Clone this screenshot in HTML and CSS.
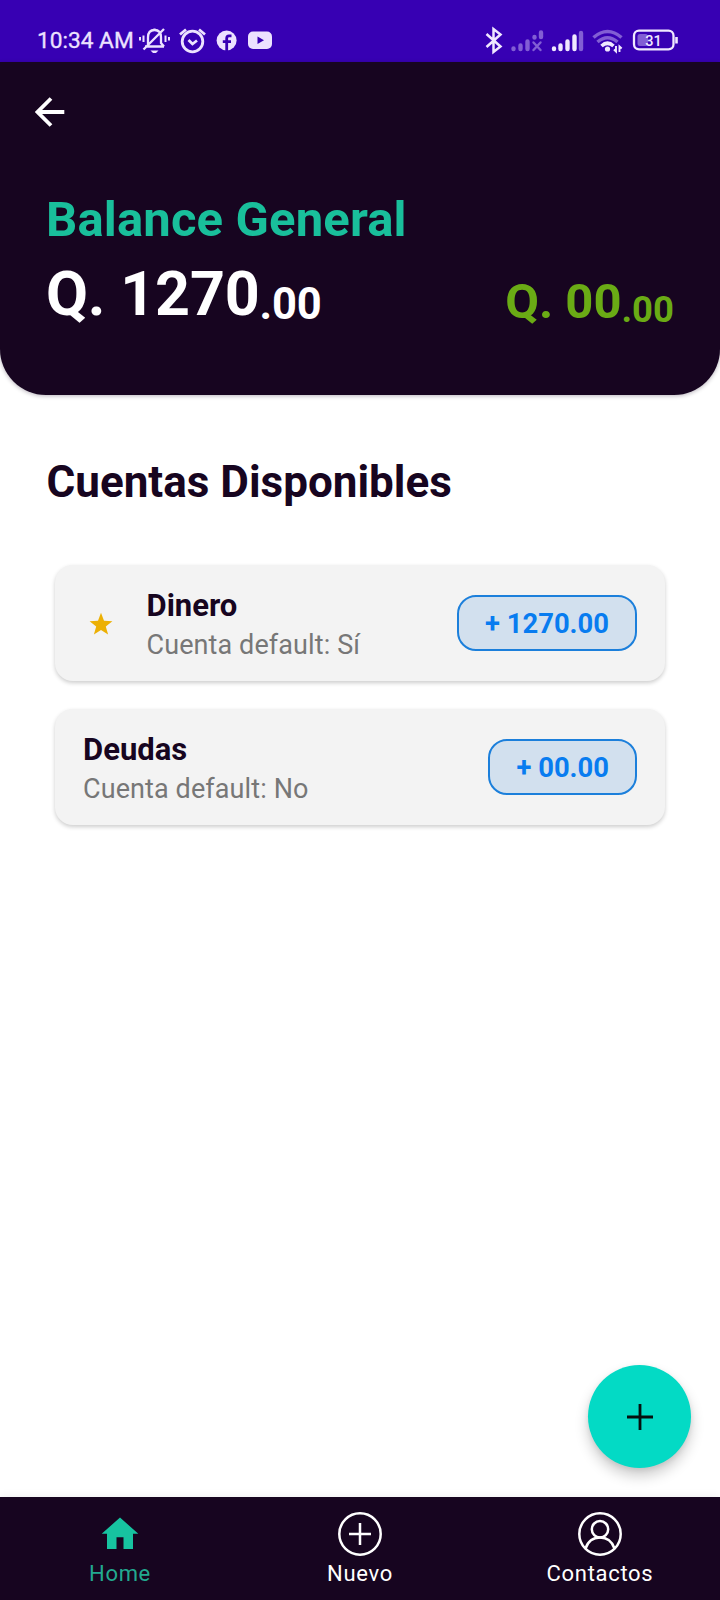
FILE: index.html
```html
<!DOCTYPE html>
<html lang="es">
<head>
<meta charset="utf-8">
<title>Balance General</title>
<link rel="stylesheet" href="styles.css">
</head>
<body>
<div class="screen">
  <div class="status">
    <span class="clock">10:34 AM</span>
    <svg class="status-left" width="136" height="30" viewBox="0 0 136 30" fill="none" stroke="#ece2ff" stroke-width="2.300">
      <path d="M7 21.500H26M10 21V12.500Q10 5 16.500 5Q23 5 23 12.500V18L26 21.500M16.500 6V3.500M5.500 24.500L26 4"/>
      <path d="M12.500 25.500H20.500L18 28H15Z" fill="#ece2ff" stroke="none"/>
      <path d="M5.500 10.500V17M2 12V15.500M27.500 10.500V17M31 12V15.500" stroke-width="2"/>
      <circle cx="54.500" cy="16.500" r="10.300" stroke-width="2.800"/>
      <path d="M50.500 15L54.500 19L59 15.500M42 9.500L48 4.500M67 9.500L61 4.500" stroke-width="2.800"/>
      <circle cx="88.600" cy="15.500" r="10" fill="#ece2ff" stroke="none"/>
      <path d="M88.700 26V13.300Q88.700 10.800 91 10.800H93.500M84.800 16.700H93" stroke="#3700b3" stroke-width="2.800"/>
      <rect x="110" y="6.500" width="24" height="17.500" rx="5" fill="#ece2ff" stroke="none"/>
      <path d="M119.500 11.500L126 15.200L119.500 19Z" fill="#3700b3" stroke="none"/>
    </svg>
    <svg class="status-right" width="196" height="30" viewBox="0 0 196 30" fill="none" stroke="#f0e8ff">
      <path d="M1.500 9L15.500 21.500L8.500 27V4L15.500 9.500L1.500 22" stroke-width="2.500"/>
      <g stroke="#825ed4" stroke-width="4.400" stroke-linecap="round">
        <path d="M28.500 24V23.500M35.500 24V20.500M42.500 24V16.500M49.500 12.500V12M56 12V7.500"/>
        <path d="M48.500 17.500L55.500 25M55.500 17.500L48.500 25" stroke-width="2.400"/>
      </g>
      <path d="M69 24V23.500M75.500 24V20.500M82.500 24V16.500M89.500 24V11.500" stroke-width="4.400" stroke-linecap="round"/>
      <path d="M96 24V8" stroke="#825ed4" stroke-width="4.400" stroke-linecap="round"/>
      <path d="M108.500 12.500Q122.500 .5 136.500 12.500M112.500 17Q122.500 8.500 132.500 17" stroke="#825ed4" stroke-width="3.600"/>
      <path d="M116.500 21Q122.500 15.500 128.500 21" stroke-width="3.600"/>
      <circle cx="122.500" cy="24" r="2.600" fill="#f0e8ff" stroke="none"/>
      <path d="M131 21V26.500L129 24.500M134.500 27V21.500L136.700 23.500" stroke-width="1.900"/>
      <rect x="149" y="5.700" width="39.500" height="18.600" rx="5" stroke-width="2.300"/>
      <rect x="152.500" y="9" width="10.500" height="12" rx="2.500" fill="#825ed4" stroke="none"/>
      <path d="M191.500 12V18.500" stroke-width="2.600"/>
      <text class="battery" x="168.500" y="20.500" text-anchor="middle">31</text>
    </svg>
  </div>

  <header class="header">
    <div class="appbar">
      <svg width="30" height="30" viewBox="0 0 30 30" fill="none" stroke="#fff" stroke-width="3.800"><path d="M29.300 15H3M16 1.500L2.500 15L16 28.500"/></svg>
    </div>
    <h1 class="balance-title">Balance General</h1>
    <div class="amounts">
      <div class="amount">Q. 1270<span class="cents">.00</span></div>
      <div class="amount amount-green">Q. 00<span class="cents">.00</span></div>
    </div>
  </header>

  <main class="main">
    <h2 class="section-title">Cuentas Disponibles</h2>
    <div class="cards">
      <div class="card">
        <svg class="star" width="24" height="24" viewBox="0 0 24 24"><path fill="#ecb004" d="M12 .8L15 8.800L23.400 9.200L16.800 14.400L19.100 22.500L12 17.900L4.900 22.500L7.200 14.400L.6 9.200L9 8.800Z"/></svg>
        <div class="info">
          <div class="name">Dinero</div>
          <div class="detail">Cuenta default: Sí</div>
        </div>
        <div class="pill">+ 1270.00</div>
      </div>
      <div class="card">
        <div class="info">
          <div class="name">Deudas</div>
          <div class="detail">Cuenta default: No</div>
        </div>
        <div class="pill">+ 00.00</div>
      </div>
    </div>
    <div class="fab">
      <svg width="26" height="26" viewBox="0 0 26 26" stroke="#06100f" stroke-width="2.800"><path d="M13 0V26M0 13H26"/></svg>
    </div>
  </main>

  <nav class="nav">
    <div class="tab tab-active">
      <svg width="44" height="44" viewBox="0 0 44 44"><path fill="#17c3a0" d="M22 5.500L40.300 21.800H35V37H25.500V25.300H18.500V37H9V21.800H3.700Z"/></svg>
      <span>Home</span>
    </div>
    <div class="tab">
      <svg width="44" height="44" viewBox="0 0 44 44" fill="none" stroke="#fff" stroke-width="2.500"><circle cx="22" cy="22" r="20.700"/><path d="M22 11V33M11 22H33"/></svg>
      <span>Nuevo</span>
    </div>
    <div class="tab">
      <svg width="44" height="44" viewBox="0 0 44 44" fill="none" stroke="#fff" stroke-width="2.500"><circle cx="22" cy="22" r="20.700"/><circle cx="22" cy="17.300" r="8.200"/><path d="M7.500 36.500C10 29 15.500 25.500 22 25.500S34 29 36.500 36.500"/></svg>
      <span>Contactos</span>
    </div>
  </nav>
</div>
</body>
</html>
```
FILE: styles.css
```css
* { box-sizing: border-box; margin: 0; padding: 0; }
body { background: #fff; font-family: Roboto, "Liberation Sans", sans-serif; }
svg { display: block; flex: none; }
.screen { width: 720px; height: 1600px; display: flex; flex-direction: column; overflow: hidden; }

.status { height: 62px; flex: none; background: #3700b3; display: flex; padding: 25px 39px 0 37px; }
.clock { color: #ece2ff; font-size: 22.7px; line-height: 32px; width: 100.5px; white-space: nowrap; -webkit-text-stroke: .3px #ece2ff; }
.status-right { margin-left: auto; }
.battery { font-size: 14.5px; font-weight: 500; fill: #f0e8ff; stroke: none; }

.header {
  height: 332.5px; flex: none; background: #170520; padding: 0 46px;
  border-radius: 0 0 46px 46px; box-shadow: 0 1px 4px rgba(24, 5, 32, .3);
}
.appbar { height: 128px; padding: 35px 0 0; margin-left: -11px; }
.balance-title { color: #19bf9b; font-size: 49px; line-height: 60px; letter-spacing: .15px; font-weight: 700; white-space: nowrap; }
.amounts { display: flex; justify-content: space-between; margin-top: 9px; white-space: nowrap; }
.amount { color: #fff; font-size: 61px; letter-spacing: -.2px; font-weight: 700; line-height: 71px; }
.cents { font-size: 43.5px; line-height: 0; vertical-align: -3.5px; }
.amount-green { color: #6aab15; font-size: 49px; letter-spacing: 0; padding-top: 7px; }
.amount-green .cents { font-size: 36.5px; }

.main { flex: 1; display: flex; flex-direction: column; padding: 61px 29px 29px 46.5px; }
.section-title { color: #170520; font-size: 44px; line-height: 52px; font-weight: 700; white-space: nowrap; }
.cards { display: flex; flex-direction: column; gap: 28px; margin: 57px 26px 0 8.5px; }
.card {
  height: 116px; display: flex; align-items: center; padding: 0 28px;
  background: #f3f3f3; border-radius: 18px; box-shadow: 0 2px 4px rgba(0, 0, 0, .2);
}
.star { margin: 2px 33.5px 0 6px; }
.info { flex: 1; white-space: nowrap; padding-top: 6px; }
.name { color: #170520; font-size: 31px; line-height: 38px; font-weight: 700; }
.detail { color: #777; font-size: 27px; letter-spacing: .1px; line-height: 40px; }
.pill {
  height: 56px; margin-top: 1px; padding: 0 26px; border: 2px solid #1b7fdb; border-radius: 19px;
  background: #d2e0ee; color: #087cf0; font-size: 27.4px; line-height: 55px; font-weight: 700; white-space: nowrap;
}
.fab {
  width: 103px; height: 103px; margin: auto 0 0 auto; border-radius: 50%; background: #03dac5;
  display: flex; align-items: center; justify-content: center;
  box-shadow: 0 8px 14px rgba(0, 0, 0, .2), 0 2px 5px rgba(0, 0, 0, .08);
}

.nav { height: 103px; flex: none; background: #170520; display: flex; box-shadow: 0 -2px 8px rgba(0, 0, 0, .05); }
.tab {
  flex: 1; display: flex; flex-direction: column; align-items: center; padding-top: 15px;
  color: #fff; font-size: 22px; line-height: 30px; letter-spacing: .7px;
}
.tab span { margin-top: 3px; }
.tab-active { color: #22a990; }
```
